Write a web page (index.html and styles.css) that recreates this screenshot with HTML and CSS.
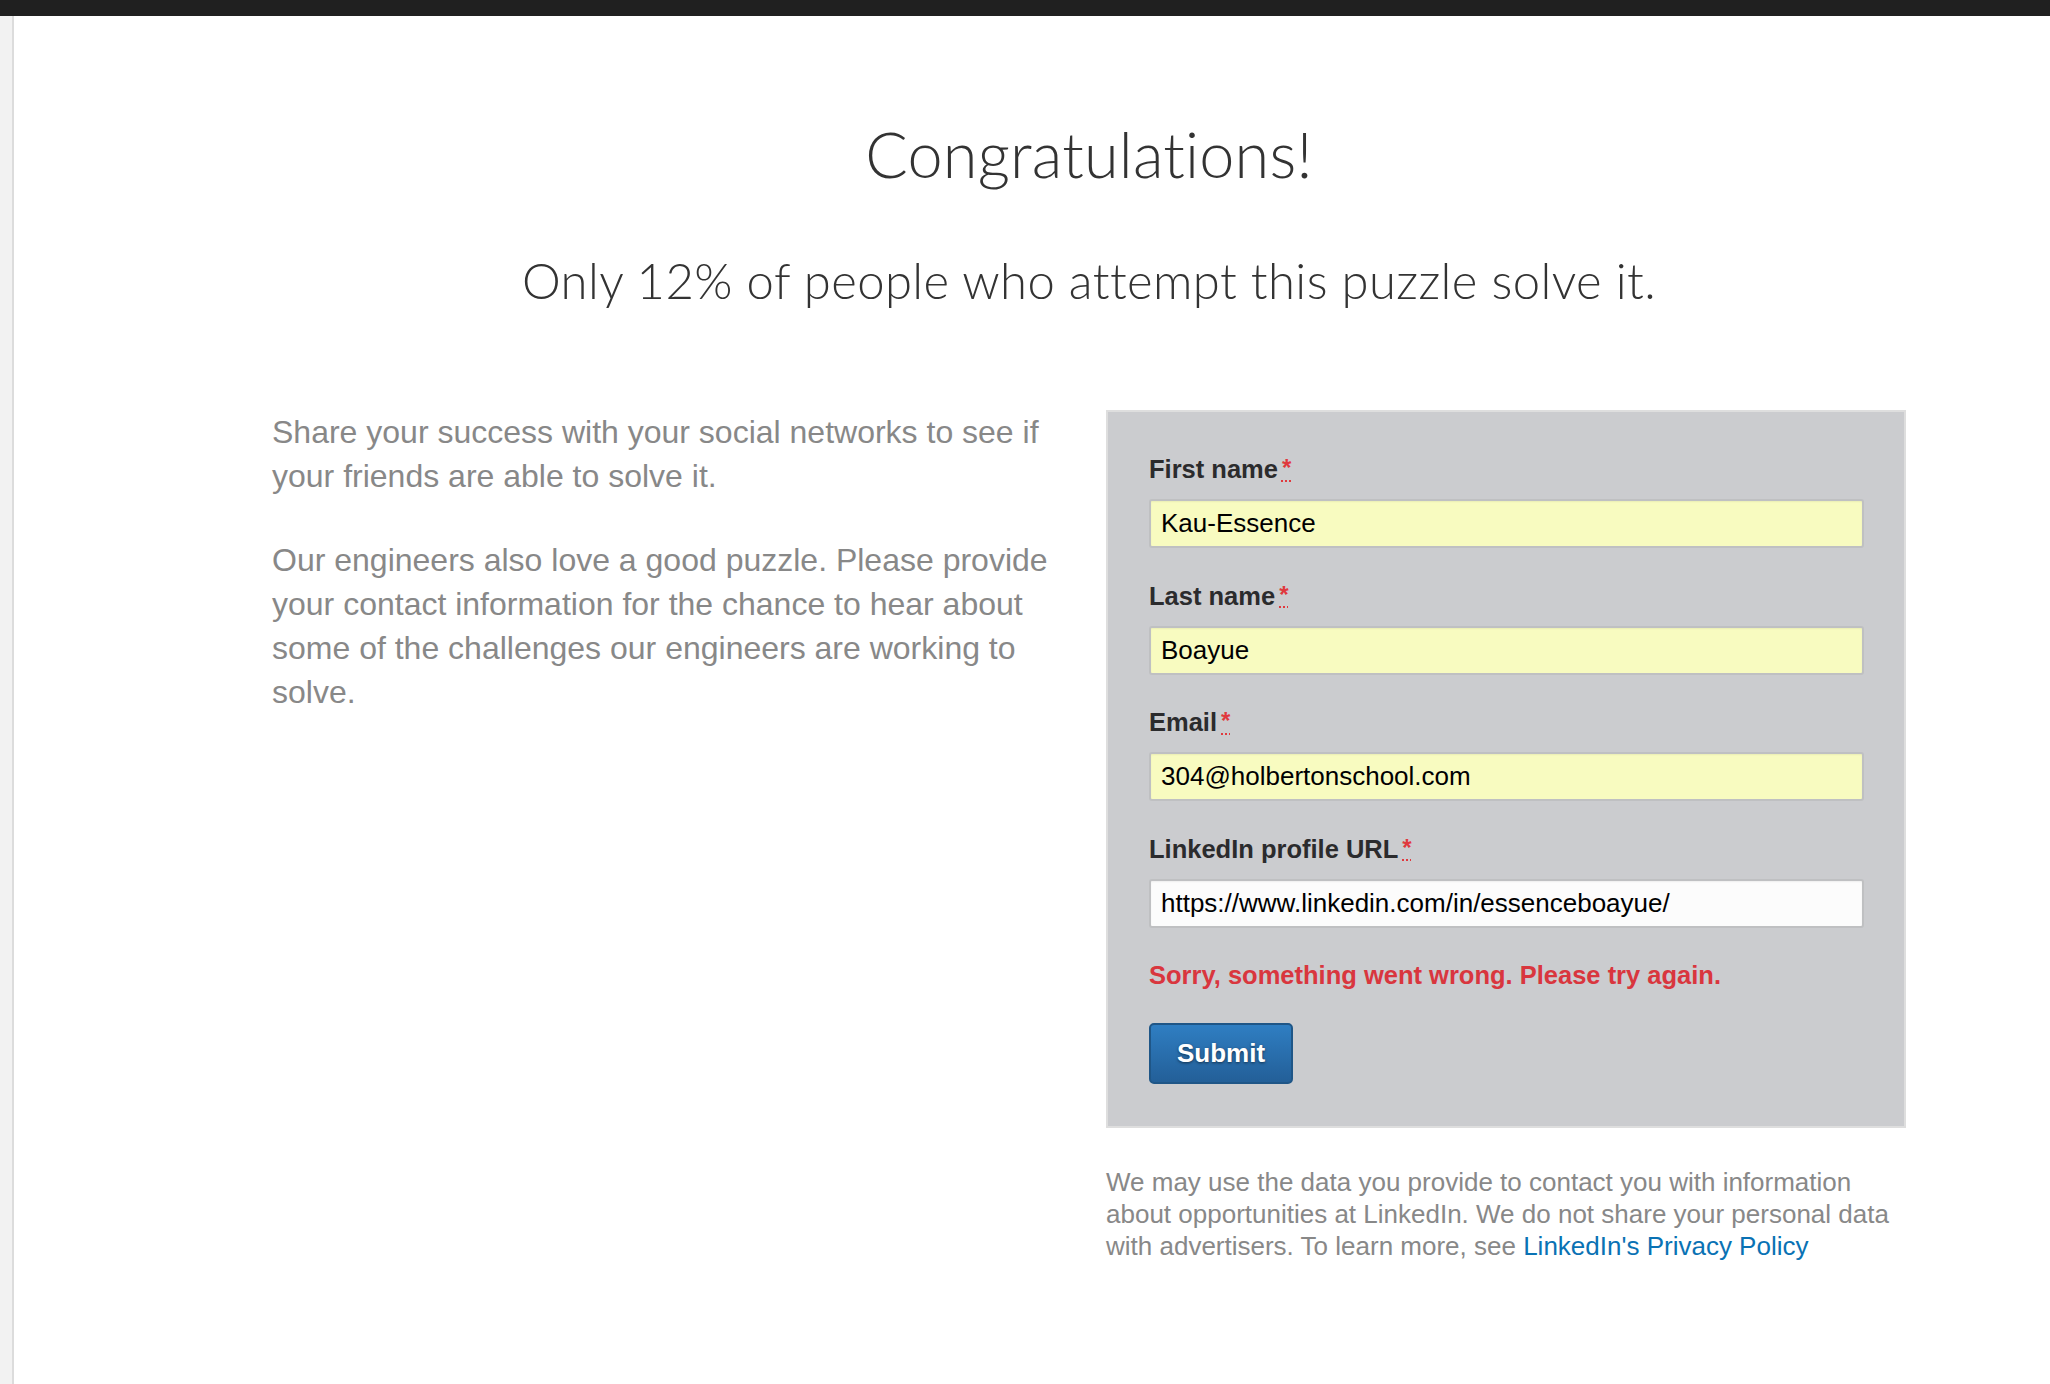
FILE: index.html
```html
<!DOCTYPE html>
<html lang="en">
<head>
<meta charset="utf-8">
<title>Congratulations!</title>
<link rel="stylesheet" href="styles.css">
</head>
<body>
<div class="topbar"></div>
<div class="frame">
  <div class="gutter"></div>
  <main class="page">
    <h1 class="title">Congratulations!</h1>
    <h2 class="subtitle">Only 12% of people who attempt this puzzle solve it.</h2>
    <div class="columns">
      <div class="intro">
        <p>Share your success with your social networks to see if your friends are able to solve it.</p>
        <p>Our engineers also love a good puzzle. Please provide your contact information for the chance to hear about some of the challenges our engineers are working to solve.</p>
      </div>
      <div class="formcol">
        <form class="card">
          <label class="field-label" for="fn">First name<abbr class="req" title="required">*</abbr></label>
          <input class="field filled" id="fn" type="text" value="Kau-Essence">
          <label class="field-label" for="ln">Last name<abbr class="req" title="required">*</abbr></label>
          <input class="field filled" id="ln" type="text" value="Boayue">
          <label class="field-label" for="em">Email<abbr class="req" title="required">*</abbr></label>
          <input class="field filled" id="em" type="text" value="304@holbertonschool.com">
          <label class="field-label" for="li">LinkedIn profile URL<abbr class="req" title="required">*</abbr></label>
          <input class="field" id="li" type="text" value="https://www.linkedin.com/in/essenceboayue/">
          <p class="error">Sorry, something went wrong. Please try again.</p>
          <button class="submit" type="button">Submit</button>
        </form>
        <p class="legal">We may use the data you provide to contact you with information about opportunities at LinkedIn. We do not share your personal data with advertisers. To learn more, see <a class="legal-link" href="#">LinkedIn's Privacy Policy</a></p>
      </div>
    </div>
  </main>
</div>
</body>
</html>
```

FILE: styles.css
```css
html, body {
  margin: 0;
  padding: 0;
  background: #ffffff;
}

body {
  font-family: "Liberation Sans", Arial, Helvetica, sans-serif;
  min-height: 1384px;
  display: flex;
  flex-direction: column;
}

.topbar {
  height: 16px;
  background: #202020;
  flex: none;
}

.frame {
  flex: 1;
  display: flex;
}

.gutter {
  width: 12px;
  background: #f2f2f2;
  border-right: 2px solid #dcdcdc;
  flex: none;
}

.page {
  flex: 1;
  padding: 100px 0 0 114px;
  display: flex;
  flex-direction: column;
  align-items: center;
}

.title {
  margin: 0;
  font-family: Lato, "Open Sans", sans-serif;
  font-weight: 300;
  font-size: 63px;
  line-height: 76px;
  color: #333333;
  letter-spacing: 0.2px;
}

.subtitle {
  margin: 58px 0 0;
  font-family: Lato, "Open Sans", sans-serif;
  font-weight: 300;
  font-size: 49px;
  line-height: 60px;
  color: #333333;
  letter-spacing: 0.4px;
}

.columns {
  margin-top: 100px;
  display: grid;
  grid-template-columns: 800px 800px;
  column-gap: 34px;
}

.intro p {
  margin: 0 0 40px;
  font-size: 32px;
  line-height: 44px;
  color: #888888;
}

.card {
  background: #cbcccf;
  border: 2px solid #dedede;
  padding: 42px 41px 42px;
  display: flex;
  flex-direction: column;
  align-items: flex-start;
}

.field-label {
  display: block;
  height: 30px;
  font-size: 25.5px;
  line-height: 30px;
  font-weight: bold;
  color: #2b2b2d;
  margin-bottom: 15px;
}

.req {
  color: #e0393e;
  font-size: 24px;
  line-height: 0;
  margin-left: 4px;
  text-decoration: underline dotted #e0393e;
  text-decoration-thickness: 2px;
  text-underline-offset: 4px;
  position: relative;
  top: -2px;
}

.field {
  box-sizing: border-box;
  width: 715px;
  height: 49px;
  margin: 0 0 32.5px;
  padding: 0 10px;
  border: 2px solid #bfc0c2;
  border-radius: 3px;
  background: #fcfcfc;
  font-family: "Liberation Sans", Arial, sans-serif;
  font-size: 26px;
  color: #000000;
  box-shadow: inset 0 1px 2px rgba(0, 0, 0, 0.06);
}

.field.filled {
  background: #f8fbc0;
}

.error {
  margin: 0 0 33px;
  font-size: 25.5px;
  line-height: 30px;
  font-weight: bold;
  color: #d9363e;
}

.submit {
  height: 61px;
  padding: 0 26px;
  border: 2px solid #1f5687;
  border-radius: 5px;
  background: linear-gradient(#2f7ec2, #235f98);
  color: #ffffff;
  font-family: "Liberation Sans", Arial, sans-serif;
  font-weight: bold;
  font-size: 26px;
  text-shadow: 0 1px 3px rgba(0, 0, 0, 0.55);
  cursor: pointer;
}

.legal {
  margin: 38px 0 0;
  font-size: 26px;
  line-height: 32px;
  color: #888888;
}

.legal-link {
  color: #0a72b4;
  text-decoration: none;
}
```
